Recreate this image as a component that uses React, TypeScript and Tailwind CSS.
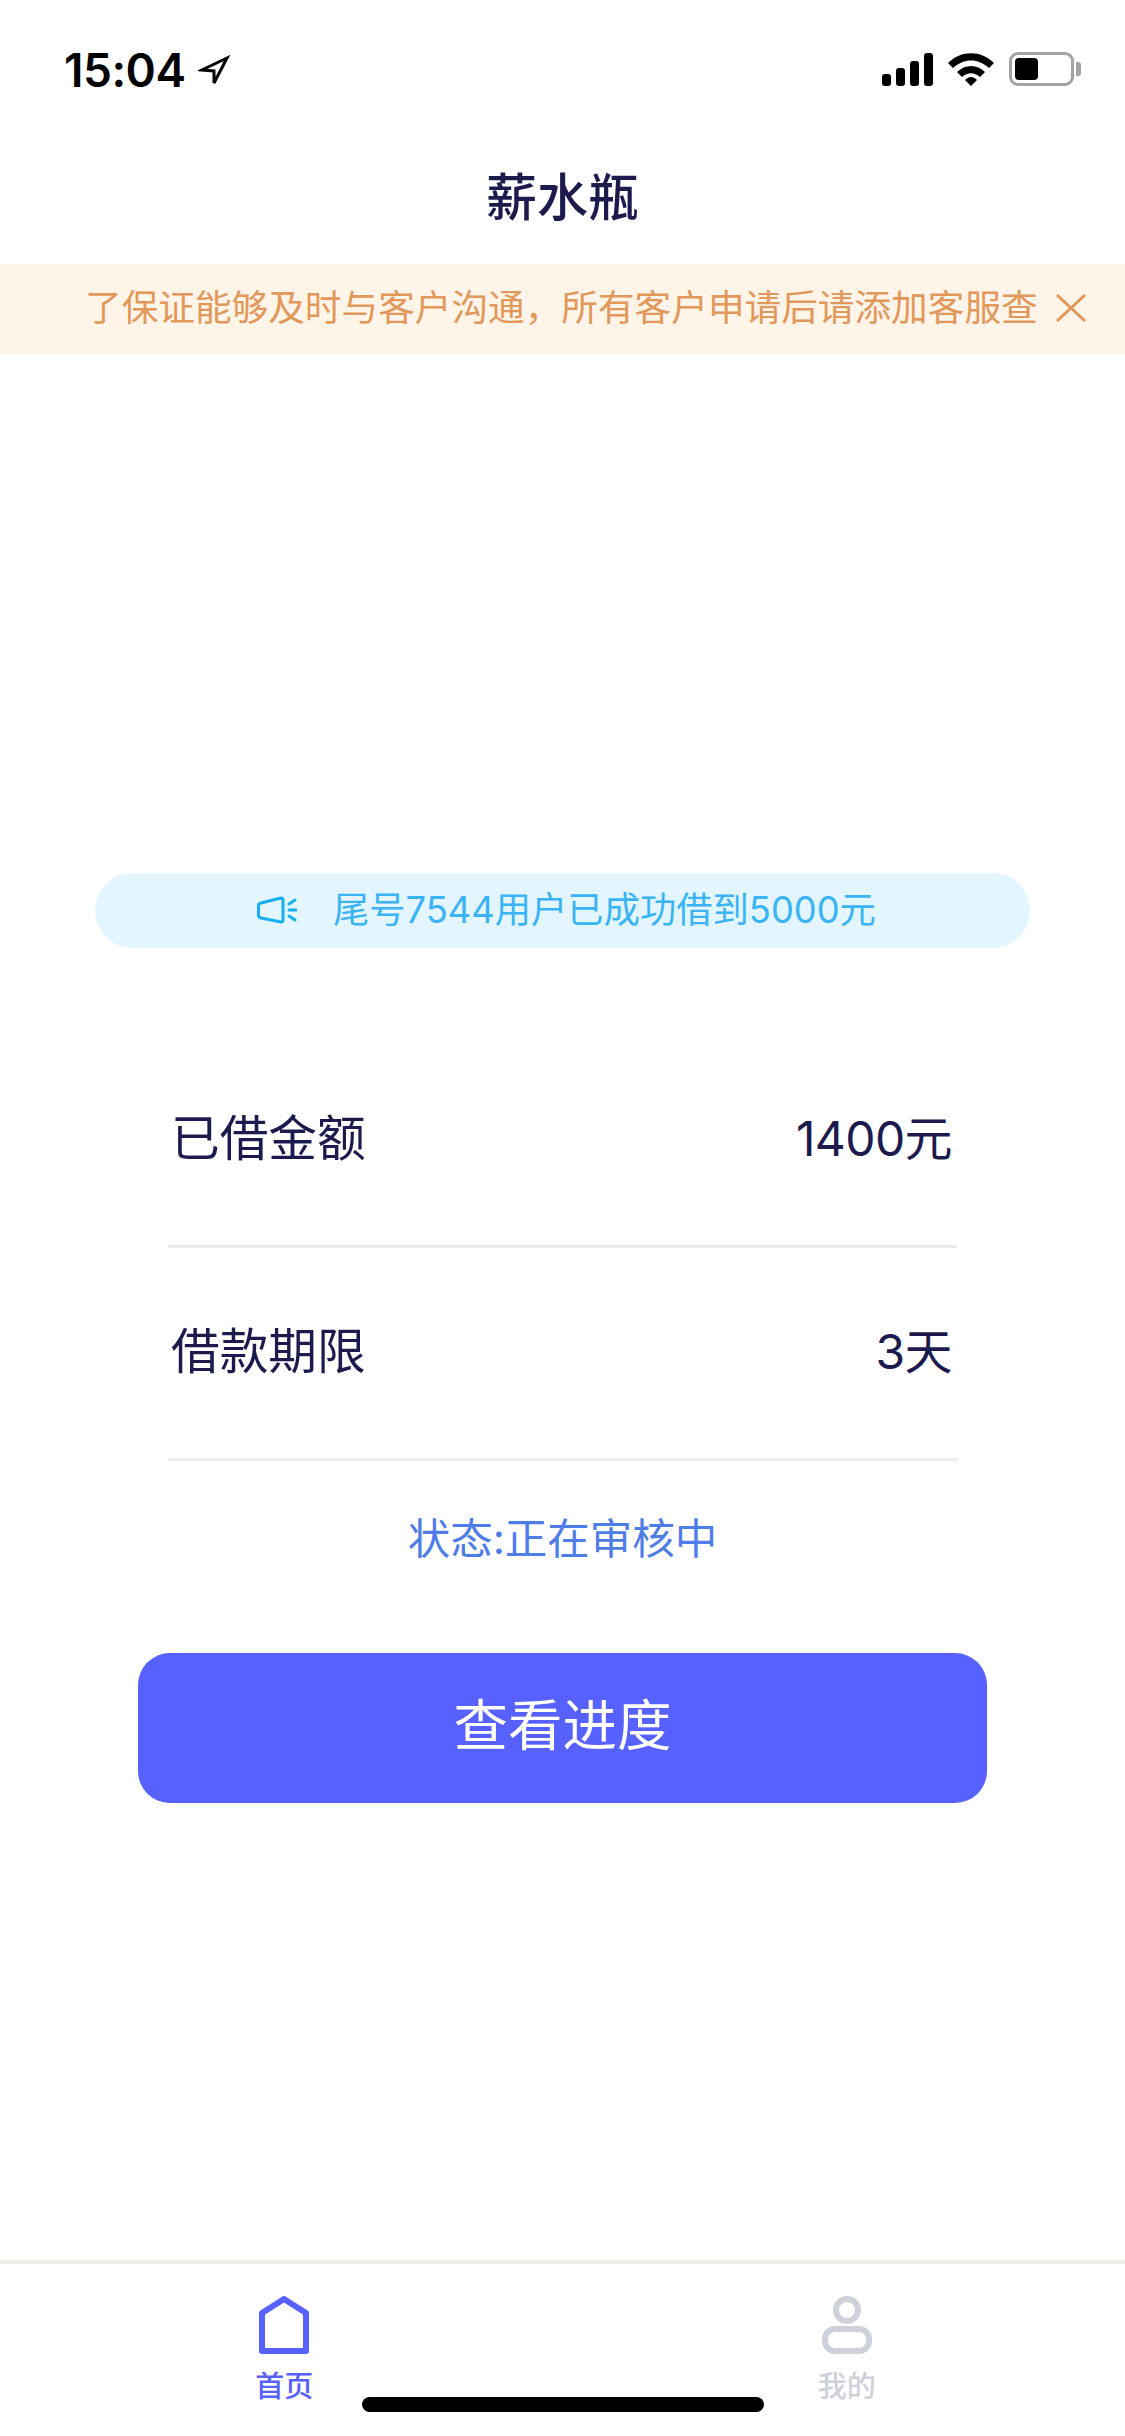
const CJK = "font-['Inter','Noto_Sans_CJK_SC','Noto_Sans',sans-serif]";

function StatusBar() {
  return (
    <div className="flex h-[132px] items-start justify-between pl-[64px] pr-[44px] pt-[52px]">
      <div className="flex items-center">
        <span className="font-['Inter',sans-serif] text-[46px] leading-[36px] font-semibold tracking-[-0.5px] text-black">15:04</span>
        <svg className="ml-[12px] mt-[2px]" width="32" height="32" viewBox="0 0 32 32" fill="none">
          <path d="M29 3 L4 15 L16 16 L16 28 Z" stroke="#000" strokeWidth="3" strokeLinejoin="miter" />
        </svg>
      </div>
      <div className="flex items-center">
        <svg width="51" height="33" viewBox="0 0 51 33" fill="#000">
          <rect x="0" y="21" width="9" height="12" rx="3" />
          <rect x="14" y="15" width="9" height="18" rx="3" />
          <rect x="28" y="8" width="9" height="25" rx="3" />
          <rect x="42" y="0" width="9" height="33" rx="3" />
        </svg>
        <svg className="ml-[15px]" width="46" height="33" viewBox="0 0 46 33" fill="#000">
          <path d="M0 10 C13 -3 33 -3 46 10 L41 15 C30 5 16 5 5 15 Z" />
          <path d="M9 19 C17 11 29 11 37 19 L32 24 C26 19 20 19 14 24 Z" />
          <path d="M17 27 C21 23 25 23 29 27 L23 33 Z" />
        </svg>
        <div className="ml-[15px] flex items-center">
          <div className="h-[34px] w-[65px] rounded-[9px] border-[3px] border-[#a3a3a3] p-[3px]">
            <div className="h-full w-[23px] rounded-[4px] bg-black" />
          </div>
          <div className="ml-[2px] h-[14px] w-[5px] rounded-r-[3px] bg-[#a3a3a3]" />
        </div>
      </div>
    </div>
  );
}

function Row({ label, value }: { label: string; value: string }) {
  return (
    <div className="flex h-[213px] items-center justify-between border-b-[3px] border-[#ececec] pb-[2px] pl-[3px] pr-[5px] text-[#1d1b4e]">
      <span className="text-[48.7px]">{label}</span>
      <span className="text-[48px] tracking-[-0.6px]">{value}</span>
    </div>
  );
}

export default function App() {
  return (
    <div className={`relative flex h-[2436px] w-[1125px] flex-col overflow-hidden bg-white ${CJK}`}>
      <StatusBar />

      {/* Title */}
      <div className="flex h-[132px] items-center justify-center text-[51px] font-medium text-[#1d1b4e]">
        薪水瓶
      </div>

      {/* Notice */}
      <div className="flex h-[90px] items-center bg-[#fff4e8] pb-[2px] pl-[85px] text-[36.65px] text-[#e2985a]">
        <span className="whitespace-nowrap">了保证能够及时与客户沟通，所有客户申请后请添加客服查</span>
        <svg className="ml-[18px]" width="30" height="28" viewBox="0 0 30 28" fill="none" stroke="#e2985a" strokeWidth="3">
          <path d="M1 1 L29 27 M29 1 L1 27" />
        </svg>
      </div>

      {/* Ticker */}
      <div className="mx-[95px] mt-[519px] flex h-[75px] items-center rounded-full bg-[#e3f6ff] pb-[1px] pl-[162px] text-[36.3px] text-[#3ab4f5]">
        <svg width="40" height="28" viewBox="0 0 40 28" fill="none" stroke="#14b0f0" strokeWidth="3" strokeLinecap="round" strokeLinejoin="round">
          <path d="M4 7 L24 2 Q26 2 26 4 V24 Q26 26 24 26 L4 22 Q1.500 21.500 1.500 19 V10 Q1.500 7.500 4 7 Z" />
          <path d="M32 8 L38 4 M32 14 H39 M32 20 L38 24" />
        </svg>
        <span className="ml-[36px] whitespace-nowrap">尾号7544用户已成功借到5000元</span>
      </div>

      {/* Loan details */}
      <div className="mx-[168px] mt-[87px]">
        <Row label="已借金额" value="1400元" />
        <Row label="借款期限" value="3天" />
      </div>

      <div className="mt-[39px] text-center text-[42.5px] leading-[78px] text-[#4f7de8]">状态:正在审核中</div>

      <button type="button" className="mx-[138px] mt-[75px] flex h-[150px] items-center justify-center rounded-[32px] bg-[#5761ff] pb-[4px] text-[54.5px] text-white">
        查看进度
      </button>

      {/* Tab bar */}
      <div className="mt-auto flex h-[176px] border-t-[4px] border-[#f2efe9]">
        <div className="flex w-1/2 flex-col items-center pl-[6px] pt-[32px] text-[29px] leading-[40px] font-medium text-[#5761ff]">
          <svg width="50" height="58" viewBox="0 0 50 58" fill="none" stroke="#5761ff" strokeWidth="6" strokeLinejoin="round">
            <path d="M3 17 L25 3 L47 17 V55 H3 Z" />
          </svg>
          <span className="mt-[13px]">首页</span>
        </div>
        <div className="flex w-1/2 flex-col items-center pl-[6px] pt-[32px] text-[29px] leading-[40px] font-medium text-[#ced1d9]">
          <svg width="50" height="58" viewBox="0 0 50 58" fill="none" stroke="#ced1d9" strokeWidth="6">
            <ellipse cx="25" cy="14" rx="11" ry="11" />
            <rect x="3" y="33" width="44" height="22" rx="10" />
          </svg>
          <span className="mt-[13px]">我的</span>
        </div>
      </div>

      {/* Home indicator */}
      <div className="absolute bottom-[24px] left-[362px] h-[15px] w-[402px] rounded-full bg-black" />
    </div>
  );
}
